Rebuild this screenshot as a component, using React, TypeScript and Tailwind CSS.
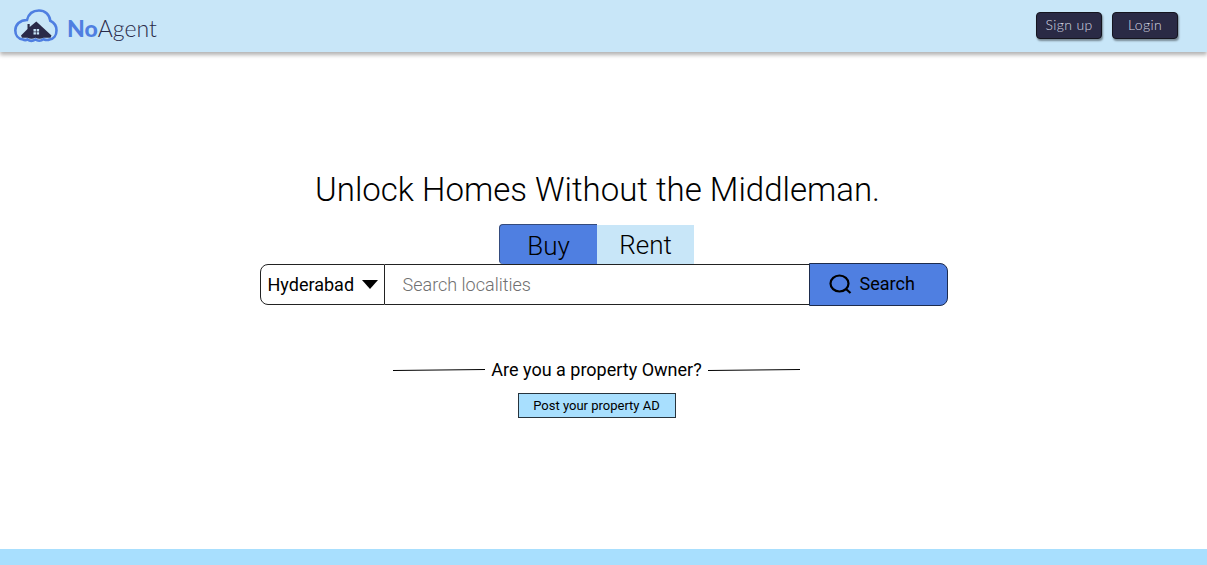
import React, { useState } from "react";

function Logo() {
  return (
    <svg viewBox="0 0 46 34" className="h-[34px] w-[46px]" fill="none" aria-hidden="true">
      <path
        d="M10 30.500 C5 30 2.300 26 2.300 21.500 C2.300 15.500 7 11 14 11 C15.500 5 20 1.500 26 1.500 C32 1.500 36.500 5.500 37.300 11.800 C41 13.500 43.500 17 43.500 21.500 C43.500 26.500 40.500 30 36.500 30.500 C35 31.200 32.500 31 30.500 30.200 C28 32 24.500 32 22.500 30.500 C20 32 16.500 32 14.500 30.500 C13 31.300 11.500 31.300 10 30.500 Z"
        stroke="#4f7fe1"
        strokeWidth="2.600"
      />
      <path
        d="M8 26.500 L14.500 20 V15 H16.700 V18 L23.300 12.500 L38.500 26.500 L37.500 28.700 H30.500 C28 30 25 30 22.500 28.700 C20 30 17 30 14.500 28.700 H9 Z"
        fill="#2a2a49"
      />
      <path d="M20.500 20 h2.400 v2.400 h-2.400 Z M23.700 20 h2.400 v2.400 h-2.400 Z M20.500 23.200 h2.400 v2.400 h-2.400 Z M23.700 23.200 h2.400 v2.400 h-2.400 Z" fill="#c8e6f8" />
    </svg>
  );
}

const accountButton =
  "h-[27px] w-[66px] rounded border border-[#15151f] bg-[#2a2a45] pb-px font-['Lato',sans-serif] text-sm leading-5 font-light tracking-wide text-[#d5d7e3] shadow-[1px_2px_2px_rgba(0,0,0,0.4)]";

export default function App() {
  const [mode, setMode] = useState("buy");
  return (
    <div className="flex min-h-screen flex-col bg-white font-['Roboto',sans-serif] text-black">
      <header className="flex h-[52px] items-center justify-between bg-[#c8e6f8] pr-[29px] pl-[13px] shadow-[0_3px_4px_rgba(0,0,0,0.3)]">
        <a href="#" className="flex items-center gap-2 font-['Lato',sans-serif] text-[23px] text-[#2a2a49]">
          <Logo />
          <span className="pt-1 font-light">
            <span className="font-black text-[#4f7fe1]">No</span>Agent
          </span>
        </a>
        <nav className="flex gap-[10px] pb-px">
          <button className={accountButton}>Sign up</button>
          <button className={accountButton}>Login</button>
        </nav>
      </header>

      <main className="flex flex-1 flex-col items-center pt-[118px]">
        <h1 className="pr-3 text-[33px] leading-10 font-light">Unlock Homes Without the Middleman.</h1>
        <div className="mt-[14px] flex h-10 pr-[14px] text-[26px] font-light">
          <button
            onClick={() => setMode("buy")}
            aria-pressed={mode === "buy"}
            className="w-[98px] rounded-l border-t border-l border-[#344b7d] bg-[#4f7fe1] pt-0.5"
          >
            Buy
          </button>
          <button
            onClick={() => setMode("rent")}
            aria-pressed={mode === "rent"}
            className="mt-px w-[97px] bg-[#c8e6f8] pt-px"
          >
            Rent
          </button>
        </div>
        <form className="-mt-px flex w-full max-w-[688px] items-center text-lg" onSubmit={(e) => e.preventDefault()}>
          <div className="relative h-[41px] w-[125px] shrink-0">
            <select
              aria-label="City"
              className="h-full w-full appearance-none rounded-l-lg border border-[#222222] bg-white pl-[7px]"
            >
              <option>Hyderabad</option>
            </select>
            <svg viewBox="0 0 16 9" className="pointer-events-none absolute top-4 right-[7px] h-[9px] w-4" aria-hidden="true">
              <path d="M0 0 H16 L8 9 Z" fill="#000000" />
            </svg>
          </div>
          <input
            type="text"
            aria-label="Search localities"
            placeholder="Search localities"
            className="h-[41px] min-w-0 flex-1 border-y border-[#222222] pl-[18px] font-light placeholder:text-[#707070]"
          />
          <button className="flex h-[43px] w-[139px] shrink-0 items-center gap-2 rounded-r-lg border border-[#1d2c4d] bg-[#4f7fe1] pb-0.5 pl-[19px]">
            <svg viewBox="0 0 23 20" className="h-5 w-[23px]" fill="none" stroke="#000000" strokeWidth="2.200" aria-hidden="true">
              <ellipse cx="10.500" cy="9.500" rx="9" ry="8" />
              <path d="M17 15 L21.500 19" />
            </svg>
            Search
          </button>
        </form>

        <section className="mt-[50px] flex flex-col items-center pr-[14px]">
          <div className="flex items-center gap-[6px]">
            <svg viewBox="0 0 92 2" className="h-[2px] w-[92px]" aria-hidden="true">
              <path d="M0 1.500 L92 0.500" stroke="#000000" />
            </svg>
            <h2 className="text-lg">Are you a property Owner?</h2>
            <svg viewBox="0 0 92 2" className="h-[2px] w-[92px]" aria-hidden="true">
              <path d="M0 1.500 L92 0.500" stroke="#000000" />
            </svg>
          </div>
          <button className="mt-[9px] h-[25px] w-[158px] border border-[#27343d] bg-[#a8dffe] text-[13px]">
            Post your property AD
          </button>
        </section>
      </main>

      <footer className="h-4 bg-[#a8dffe]" />
    </div>
  );
}
